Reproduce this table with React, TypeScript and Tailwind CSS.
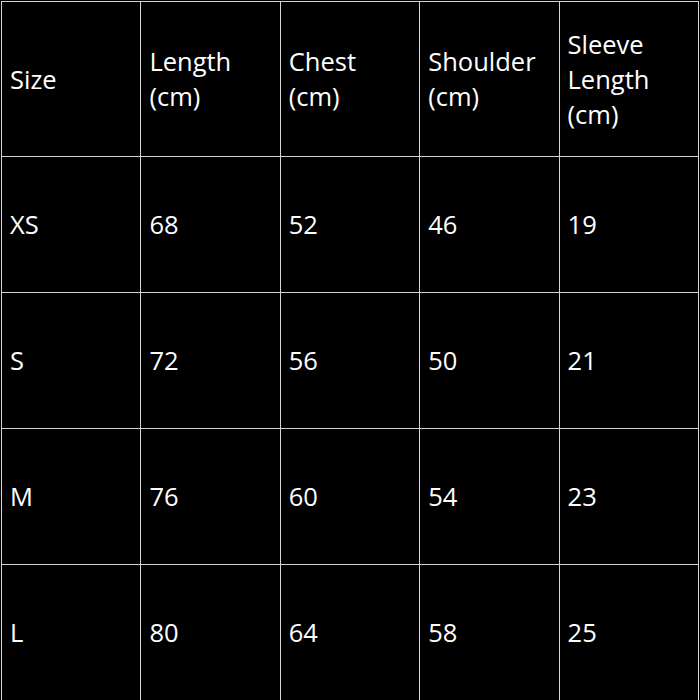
const headers = ["Size", "Length (cm)", "Chest (cm)", "Shoulder (cm)", "Sleeve Length (cm)"];

const rows = [
  ["XS", "68", "52", "46", "19"],
  ["S", "72", "56", "50", "21"],
  ["M", "76", "60", "54", "23"],
  ["L", "80", "64", "58", "25"],
];

export default function App() {
  return (
    <div className="w-[700px] h-[700px] bg-black p-px" style={{ fontFamily: '"Open Sans", sans-serif' }}>
      <table className="w-[698px] border-collapse table-fixed text-white text-[25.5px] leading-[35px]">
        <thead>
          <tr className="h-[155px]">
            {headers.map((h) => (
              <th key={h} className="border border-[#d4d4d4] pl-2 pr-2 text-left font-normal align-middle">
                {h}
              </th>
            ))}
          </tr>
        </thead>
        <tbody>
          {rows.map((r) => (
            <tr key={r[0]} className="h-[136px]">
              {r.map((c, i) => (
                <td key={i} className="border border-[#d4d4d4] pl-2 pr-2 align-middle">
                  {c}
                </td>
              ))}
            </tr>
          ))}
        </tbody>
      </table>
    </div>
  );
}
